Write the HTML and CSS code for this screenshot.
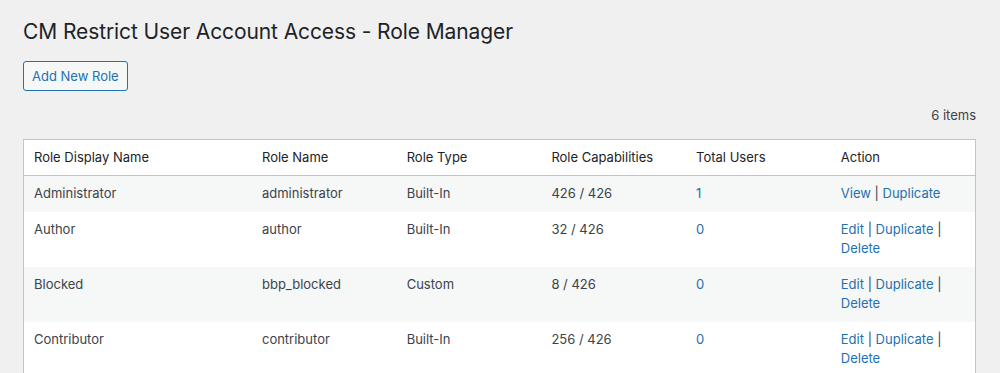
FILE: index.html
```html
<!DOCTYPE html>
<html lang="en">
<head>
  <meta charset="UTF-8" />
  <title>Role Manager</title>
  <link rel="stylesheet" href="styles.css">
</head>
<body>
  <div class="wrap">
    <h1 class="page-title">CM Restrict User Account Access - Role Manager</h1>
    <a href="#" class="add-btn">Add New Role</a>

    <div class="tablenav">6 items</div>

    <table class="roles">
      <colgroup>
        <col class="col-display" />
        <col class="col-name" />
        <col class="col-type" />
        <col class="col-caps" />
        <col class="col-users" />
        <col />
      </colgroup>
      <thead>
        <tr>
          <th>Role Display Name</th>
          <th>Role Name</th>
          <th>Role Type</th>
          <th>Role Capabilities</th>
          <th>Total Users</th>
          <th>Action</th>
        </tr>
      </thead>
      <tbody>
        <tr>
          <td>Administrator</td>
          <td>administrator</td>
          <td>Built-In</td>
          <td>426 / 426</td>
          <td><a href="#">1</a></td>
          <td><a href="#">View</a> | <a href="#">Duplicate</a></td>
        </tr>
        <tr>
          <td>Author</td>
          <td>author</td>
          <td>Built-In</td>
          <td>32 / 426</td>
          <td><a href="#">0</a></td>
          <td><a href="#">Edit</a> | <a href="#">Duplicate</a> |<br><a href="#">Delete</a></td>
        </tr>
        <tr>
          <td>Blocked</td>
          <td>bbp_blocked</td>
          <td>Custom</td>
          <td>8 / 426</td>
          <td><a href="#">0</a></td>
          <td><a href="#">Edit</a> | <a href="#">Duplicate</a> |<br><a href="#">Delete</a></td>
        </tr>
        <tr>
          <td>Contributor</td>
          <td>contributor</td>
          <td>Built-In</td>
          <td>256 / 426</td>
          <td><a href="#">0</a></td>
          <td><a href="#">Edit</a> | <a href="#">Duplicate</a> |<br><a href="#">Delete</a></td>
        </tr>
        <tr>
          <td>Editor</td>
          <td>editor</td>
          <td>Built-In</td>
          <td>34 / 426</td>
          <td><a href="#">0</a></td>
          <td><a href="#">Edit</a> | <a href="#">Duplicate</a> |<br><a href="#">Delete</a></td>
        </tr>
      </tbody>
    </table>
  </div>
</body>
</html>
```
FILE: styles.css
```css
body {
  margin: 0;
  background: #f0f0f1;
  color: #3c434a;
  font-family: Inter, "Noto Sans", sans-serif;
  font-size: 13px;
  line-height: 1.4em;
}
.wrap {
  padding: 0 24px 0 23px;
}
.page-title {
  font-size: 21px;
  font-weight: 400;
  letter-spacing: -0.1px;
  color: #1d2327;
  margin: 0;
  padding: 17px 0 0 0;
  line-height: 30px;
}
.add-btn {
  display: inline-block;
  margin-top: 14px;
  padding: 0 8px;
  height: 28px;
  line-height: 28px;
  border: 1px solid #2271b1;
  border-radius: 3px;
  background: #f6f7f7;
  color: #2271b1;
  font-size: 13px;
  text-decoration: none;
}
.tablenav {
  text-align: right;
  margin-top: 15px;
  height: 33px;
  color: #3c434a;
}
.roles {
  width: 100%;
  border-collapse: collapse;
  border: 1px solid #c3c4c7;
  background: #fff;
  table-layout: fixed;
}
.col-display { width: 24%; }
.col-name { width: 15.2%; }
.col-type { width: 15.2%; }
.col-caps { width: 15.2%; }
.col-users { width: 15.2%; }
.roles th {
  text-align: left;
  font-weight: 400;
  font-size: 13px;
  color: #1d2327;
  padding: 8px 10px;
  line-height: 19px;
  border-bottom: 1px solid #c3c4c7;
}
.roles td {
  padding: 8px 10px;
  line-height: 19.5px;
  vertical-align: top;
  color: #3c434a;
}
.roles tbody tr:nth-child(odd) {
  background: #f6f7f7;
}
.roles a {
  color: #2271b1;
  text-decoration: none;
}
```
